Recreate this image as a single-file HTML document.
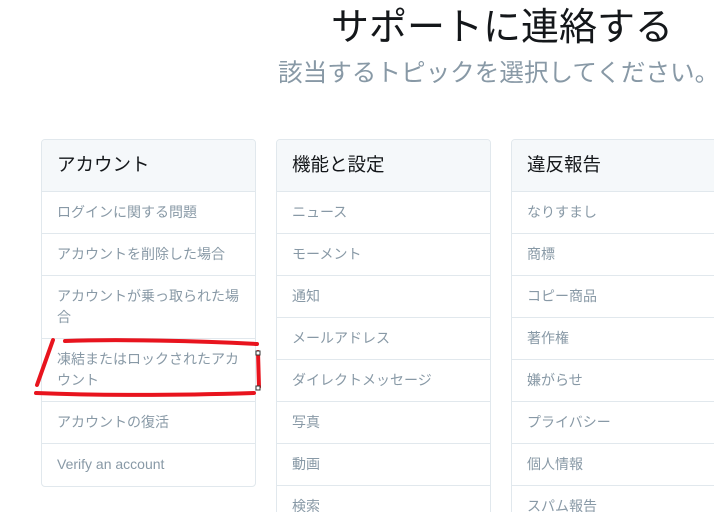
<!DOCTYPE html>
<html style="width:714px;height:512px;overflow:hidden"><head><meta charset="utf-8"><style>
*{margin:0;padding:0;box-sizing:border-box}
body{width:714px;height:512px;overflow:hidden;background:#fff;font-family:"Liberation Sans","Noto Sans CJK JP",sans-serif;position:relative}
.t{position:absolute;left:331px;top:3px;font-size:38px;color:#14171a;white-space:nowrap;line-height:50px}
.s{position:absolute;left:278px;top:58px;font-size:24.6px;color:#8899a6;white-space:nowrap;line-height:32px}
.p{position:absolute;top:139px;width:215px;border:1px solid #e1e8ed;border-radius:4px;background:#fff;overflow:hidden}
.h{height:52px;background:#f5f8fa;border-bottom:1px solid #e1e8ed;font-size:18.5px;color:#14171a;padding:12px 0 0 15px;line-height:26px}
.r{border-bottom:1px solid #e1e8ed;font-size:14px;color:#8899a6;padding:10px 15px 10px 15px;line-height:21px;min-height:42px}
.r:last-child{border-bottom:none}
</style></head><body>
<div class="t">サポートに連絡する</div>
<div class="s">該当するトピックを選択してください。</div>
<div class="p" style="left:41px">
<div class="h">アカウント</div>
<div class="r">ログインに関する問題</div>
<div class="r">アカウントを削除した場合</div>
<div class="r">アカウントが乗っ取られた場合</div>
<div class="r">凍結またはロックされたアカウント</div>
<div class="r">アカウントの復活</div>
<div class="r">Verify an account</div>
</div>
<div class="p" style="left:276px;height:380px">
<div class="h">機能と設定</div>
<div class="r">ニュース</div>
<div class="r">モーメント</div>
<div class="r">通知</div>
<div class="r">メールアドレス</div>
<div class="r">ダイレクトメッセージ</div>
<div class="r">写真</div>
<div class="r">動画</div>
<div class="r">検索</div>
</div>
<div class="p" style="left:511px;width:230px;height:380px">
<div class="h">違反報告</div>
<div class="r">なりすまし</div>
<div class="r">商標</div>
<div class="r">コピー商品</div>
<div class="r">著作権</div>
<div class="r">嫌がらせ</div>
<div class="r">プライバシー</div>
<div class="r">個人情報</div>
<div class="r">スパム報告</div>
</div>
<svg style="position:absolute;left:0;top:0" width="714" height="512">
<g stroke="#e8141e" stroke-width="4" fill="none" stroke-linecap="round">
<path d="M53 340 L37 385"/>
<path d="M65 341 C120 339 200 341 257 344"/>
<path d="M258 352 L259 387"/>
<path d="M36 393 C110 396 190 395 254 393"/>
</g>
<rect x="256" y="351" width="4" height="4" fill="#fff" stroke="#333" stroke-width="1"/>
<rect x="256" y="386" width="4" height="4" fill="#fff" stroke="#333" stroke-width="1"/>
</svg>
</body></html>
